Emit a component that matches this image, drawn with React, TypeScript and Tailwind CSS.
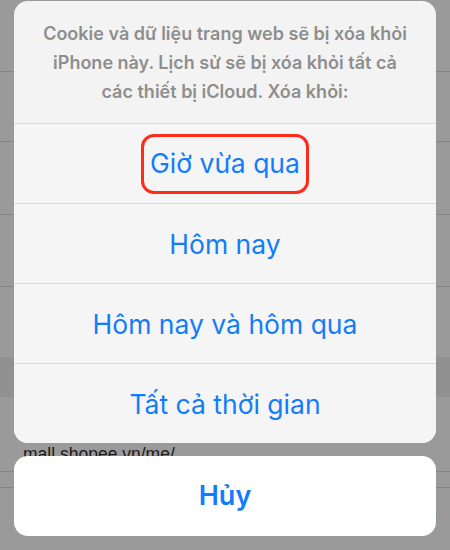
const SF = "font-['Inter','Roboto','Noto_Sans',sans-serif]";

const RANGES = ["Giờ vừa qua", "Hôm nay", "Hôm nay và hôm qua", "Tất cả thời gian"];

// dimmed Safari history page behind the sheet
function BackdropPage() {
  return (
    <div className="flex flex-col">
      <div className="h-[72px] border-b border-[#858585]" />
      <div className="h-[70px] border-b border-[#858585]" />
      <div className="h-[73px] border-b border-[#858585]" />
      <div className="h-[72px] border-b border-[#858585]" />
      <div className="h-[70px]" />
      <div className="h-[40px] bg-[#919191]" />
      <div className="h-[67px] flex items-end pl-[23px]">
        <span className="font-['Liberation_Sans',sans-serif] text-[17.5px] leading-[20px] text-[#1a1a1a]">
          mall.shopee.vn/me/
        </span>
      </div>
      <div className="h-[8px] border-b border-[#858585]" />
      <div className="h-[16px] border-b border-[#858585]" />
      <div className="h-[40px] flex items-start justify-end pr-[13px] pt-[24px]">
        <span className="text-[17px] leading-[14px] font-['Liberation_Sans',sans-serif] text-[#0a5fd6]">
          Lưu
        </span>
      </div>
    </div>
  );
}

export default function App() {
  return (
    <div className="relative w-[450px] h-[550px] overflow-hidden bg-[#9a9a9a]">
      <BackdropPage />

      {/* action sheet */}
      <div className={`absolute inset-0 flex flex-col px-[14px] pt-[1px] ${SF}`}>
        <div className="rounded-[14px] overflow-hidden bg-[#f3f3f3]">
          <div className="h-[122px] flex items-center justify-center px-[24px] text-center">
            <p className="text-[18px] leading-[29px] font-semibold text-[#8e8e8e]">
              Cookie và dữ liệu trang web sẽ bị xóa khỏi iPhone này. Lịch sử sẽ bị xóa khỏi tất cả các thiết bị iCloud. Xóa khỏi:
            </p>
          </div>
          {RANGES.map((label, i) => (
            <div
              key={label}
              className="h-[80px] border-t-[1.5px] border-[#dadada] bg-[#f5f5f5] flex items-center justify-center"
            >
              {i === 0 ? (
                <span className="inline-block h-[60px] px-[6px] border-[3px] border-[#ff2a17] rounded-[13px] text-[26.5px] leading-[53px] text-[#127cfa]">
                  {label}
                </span>
              ) : (
                <span className="text-[26.5px] leading-[32px] text-[#127cfa]">{label}</span>
              )}
            </div>
          ))}
        </div>

        <div className="mt-[13px] h-[80px] rounded-[14px] bg-white flex items-center justify-center">
          <span className="text-[27px] font-semibold text-[#127cfa]">Hủy</span>
        </div>
      </div>
    </div>
  );
}
